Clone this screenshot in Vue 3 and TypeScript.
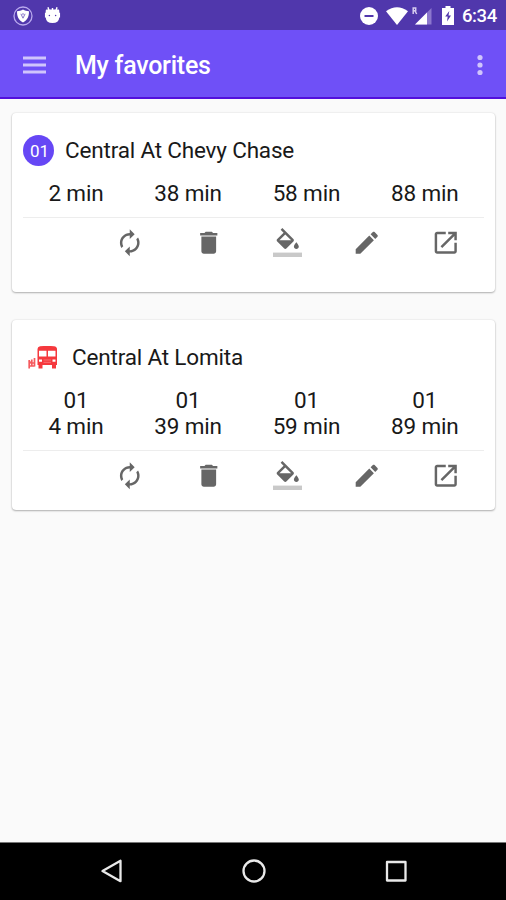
<script setup lang="ts">
interface Arrival {
  route?: string
  wait: string
}

interface Favorite {
  name: string
  badge?: string
  arrivals: Arrival[]
}

const favorites: Favorite[] = [
  {
    name: 'Central At Chevy Chase',
    badge: '01',
    arrivals: [{ wait: '2 min' }, { wait: '38 min' }, { wait: '58 min' }, { wait: '88 min' }],
  },
  {
    name: 'Central At Lomita',
    arrivals: [
      { route: '01', wait: '4 min' },
      { route: '01', wait: '39 min' },
      { route: '01', wait: '59 min' },
      { route: '01', wait: '89 min' },
    ],
  },
]
</script>

<template>
  <div class="screen">
    <header class="status">
      <div class="status-left">
        <svg class="shield" viewBox="0 0 20 20">
          <circle cx="10" cy="10" r="9" fill="none" stroke="#b9a9ee" stroke-width="1.3" />
          <path d="M10 3.600c1.800 1.200 3.900 1.600 6 1.600 0 5.200-1.600 9-6 11.200C5.600 14.200 4 10.400 4 5.200c2.100 0 4.200-.4 6-1.600z" fill="#fff" />
          <path d="M7.900 7.800l2.100 4.400 2.100-4.400M9 8h2" fill="none" stroke="#8573c8" stroke-width="1" />
        </svg>
        <svg class="robot" viewBox="0 0 18 18">
          <path d="M5.200 4L4.200.8M12.800 4l1-3.200M9 4V1.500" stroke="#fff" stroke-width="1.500" />
          <path d="M3 3.300h12q1.200 0 1.200 1.200v2.100h.8v5h-.8q-.5 6-7.200 6t-7.200-6H1v-5h.8V4.500Q1.800 3.300 3 3.300z" fill="#fff" />
          <circle cx="5.700" cy="9.500" r=".8" fill="#5438ae" />
          <circle cx="12.300" cy="9.500" r=".8" fill="#5438ae" />
        </svg>
      </div>
      <div class="status-right">
        <svg class="dnd" viewBox="0 0 18 18">
          <circle cx="9" cy="9" r="9" fill="#fff" />
          <path d="M4.500 9h9" stroke="#5137ac" stroke-width="2" />
        </svg>
        <svg class="wifi" viewBox="0 0 22 18">
          <path d="M0 4.200Q11-3.800 22 4.200L11 18z" fill="#fff" />
        </svg>
        <svg class="signal" viewBox="0 0 20 18">
          <path d="M19.500 1v16.500H3z" fill="#8c77cd" />
          <path d="M15 5.500v12H3z" fill="#fff" />
          <path d="M1.200 7V1h2.500v2.800H1.200M3 4l1.700 3" fill="none" stroke="#d6ccef" stroke-width="1.500" />
        </svg>
        <svg class="battery" viewBox="0 0 12 19">
          <path d="M3.500 0h5v2H12v17H0V2h3.500z" fill="#fff" />
          <path d="M7.300 5L3.200 10.500H5.700L5 15.500 9 9.500H6.500z" fill="#5137ac" />
        </svg>
        <span class="clock">6:34</span>
      </div>
    </header>

    <nav class="toolbar">
      <svg class="menu" viewBox="0 0 23 18">
        <path d="M0 2h23M0 9h23M0 16h23" stroke="#d0c5fc" stroke-width="2.900" />
      </svg>
      <h1>My favorites</h1>
      <svg class="more" viewBox="0 0 6 22">
        <circle cx="3" cy="3.500" r="2.600" />
        <circle cx="3" cy="11" r="2.600" />
        <circle cx="3" cy="18.500" r="2.600" />
      </svg>
    </nav>

    <main>
      <article v-for="favorite in favorites" :key="favorite.name" class="card" :class="{ grouped: !favorite.badge }">
        <div class="heading">
          <span v-if="favorite.badge" class="badge">{{ favorite.badge }}</span>
          <svg v-else class="bus" viewBox="0 0 30 23">
            <path fill="#f5383d" fill-rule="evenodd" d="M12 .3Q19.500-.5 26 .3 29 .7 29 3v16h-1v3.500h-4V19h-9.500v3.500h-4V19h-1V3Q9.500 .7 12 .3zM11 4.800v5.700h7.500V4.800zM20 4.800v5.700h7.500V4.800zM11 13.500v2.200h3V13.500zM24.500 13.500v2.200h3V13.500z" />
            <path d="M15.500 14h7.500M15.500 16.300h7.500" stroke="#ff8a8d" stroke-width=".7" />
            <path d="M1.200 14v8.500M3.800 13.500v7M6.500 12v8.500M.5 14.500l3 3M1 20h5.500M3.800 17h3" fill="none" stroke="#f55a5e" stroke-width="1.700" />
          </svg>
          <h2>{{ favorite.name }}</h2>
        </div>
        <div class="arrivals">
          <div v-for="arrival in favorite.arrivals" :key="arrival.wait" class="arrival">
            <span v-if="arrival.route">{{ arrival.route }}</span>
            <span>{{ arrival.wait }}</span>
          </div>
        </div>
        <div class="actions">
          <svg viewBox="0 0 24 24"><path d="M12 6v3l4-4-4-4v3c-4.420 0-8 3.580-8 8 0 1.570.46 3.030 1.240 4.260L6.700 14.800c-.45-.83-.7-1.790-.7-2.800 0-3.310 2.690-6 6-6zm6.760 1.740L17.300 9.200c.44.84.7 1.790.7 2.800 0 3.310-2.690 6-6 6v-3l-4 4 4 4v-3c4.420 0 8-3.580 8-8 0-1.570-.46-3.030-1.240-4.260z" /></svg>
          <svg viewBox="0 0 24 24"><path d="M6 19c0 1.100.9 2 2 2h8c1.100 0 2-.9 2-2V7H6v12zM19 4h-3.500l-1-1h-5l-1 1H5v2h14V4z" /></svg>
          <svg viewBox="0 0 24 24"><path d="M16.560 8.940L7.620 0 6.210 1.410l2.380 2.380-5.150 5.150c-.59.59-.59 1.540 0 2.120l5.500 5.500c.29.29.68.44 1.060.44s.77-.15 1.060-.44l5.500-5.500c.59-.58.59-1.530 0-2.120zM5.210 10L10 5.210 14.790 10H5.210zM19 11.500s-2 2.170-2 3.500c0 1.100.9 2 2 2s2-.9 2-2c0-1.330-2-3.500-2-3.500z" /><path class="swatch" d="M0 20h24v4H0z" /></svg>
          <svg viewBox="0 0 24 24"><path d="M3 17.250V21h3.750L17.810 9.940l-3.750-3.750L3 17.250zM20.710 7.040c.39-.39.39-1.020 0-1.410l-2.340-2.340c-.39-.39-1.020-.39-1.410 0l-1.830 1.830 3.750 3.750 1.830-1.830z" /></svg>
          <svg viewBox="0 0 24 24"><path d="M19 19H5V5h7V3H5c-1.110 0-2 .9-2 2v14c0 1.100.89 2 2 2h14c1.100 0 2-.9 2-2v-7h-2v7zM14 3v2h3.590l-9.830 9.830 1.410 1.410L19 6.410V10h2V3h-7z" /></svg>
        </div>
      </article>
    </main>

    <footer class="system-nav">
      <svg viewBox="0 0 24 24"><path d="M20.500 1.800v20.400L2.500 12z" /></svg>
      <svg viewBox="0 0 24 24"><circle cx="12" cy="12" r="10.500" /></svg>
      <svg viewBox="0 0 24 24"><rect x="3" y="3" width="18.500" height="18.500" /></svg>
    </footer>
  </div>
</template>

<style>
body {
  margin: 0;
}
</style>

<style scoped>
.screen {
  width: 506px;
  height: 900px;
  display: flex;
  flex-direction: column;
  background: #fafafa;
  font-family: Roboto, sans-serif;
  color: #191919;
  overflow: hidden;
}
svg {
  display: block;
  flex: none;
}
h1,
h2 {
  margin: 0;
  white-space: nowrap;
}
.status {
  height: 30px;
  box-sizing: border-box;
  display: flex;
  justify-content: space-between;
  align-items: center;
  padding: 1px 9px 0 13px;
  background: #5037ac;
}
.status-left,
.status-right {
  display: flex;
  align-items: center;
}
.status-left {
  gap: 11px;
}
.shield {
  width: 20px;
  height: 20px;
}
.robot {
  width: 17px;
  height: 18px;
  margin-top: -2px;
}
.dnd {
  width: 18px;
  height: 18px;
  margin-right: 8px;
}
.wifi {
  width: 22px;
  height: 18px;
  margin-right: 4px;
}
.signal {
  width: 20px;
  height: 18px;
  margin-right: 10px;
}
.battery {
  width: 12px;
  height: 19px;
  margin-right: 8px;
}
.clock {
  width: 35px;
  font-size: 18.500px;
  line-height: 28px;
  font-weight: 500;
  letter-spacing: -0.400px;
  color: #fff;
}
.toolbar {
  height: 69px;
  box-sizing: border-box;
  display: flex;
  align-items: center;
  padding: 2px 23px 0;
  background: #6f50f7;
  border-bottom: 2px solid #5210dc;
}
.menu {
  width: 23px;
  height: 18px;
}
h1 {
  margin-left: 29px;
  padding-top: 3px;
  font-size: 25px;
  line-height: 30px;
  font-weight: 500;
  letter-spacing: -0.250px;
  color: #fff;
}
.more {
  width: 6px;
  height: 22px;
  margin-left: auto;
  fill: #d0c5fc;
}
main {
  flex: 1;
  display: flex;
  flex-direction: column;
  gap: 28px;
  padding: 14px 11px 0 12px;
}
.card {
  height: 179px;
  box-sizing: border-box;
  padding: 19px 11px 0;
  background: #fff;
  border-radius: 4px;
  box-shadow: 0 1px 2px rgba(0, 0, 0, 0.280), 0 0 2px rgba(0, 0, 0, 0.120);
}
.grouped {
  height: 190px;
}
.heading {
  display: flex;
  align-items: center;
  height: 36px;
}
.badge {
  width: 31px;
  height: 31px;
  line-height: 32px;
  border-radius: 50%;
  background: #6647f5;
  color: #fff;
  font-size: 17px;
  text-align: center;
  text-indent: 2px;
}
.bus {
  width: 30px;
  height: 23px;
  margin: 0 8px 0 5px;
}
h2 {
  margin-left: 11px;
  font-size: 22.500px;
  line-height: 30px;
  font-weight: 400;
  letter-spacing: -0.180px;
}
.grouped h2 {
  margin-left: 6px;
}
.arrivals {
  display: flex;
  justify-content: space-around;
  padding: 12px 0 11px;
  border-bottom: 1px solid #ededed;
}
.arrival {
  display: flex;
  flex-direction: column;
  align-items: center;
  font-size: 22.500px;
  line-height: 26px;
  letter-spacing: -0.150px;
  white-space: nowrap;
}
.actions {
  display: flex;
  justify-content: flex-end;
  gap: 49.500px;
  padding: 9.500px 24px 0 0;
}
.actions svg {
  width: 29.500px;
  height: 29.500px;
  fill: #666;
}
.actions .swatch {
  fill: #c9c9c9;
}
.system-nav {
  height: 58px;
  box-sizing: border-box;
  display: flex;
  justify-content: space-between;
  align-items: center;
  padding: 0 98px 1px 100px;
  background: #000;
  border-top: 1px solid #777;
}
.system-nav svg {
  width: 24px;
  height: 24px;
  fill: none;
  stroke: #e9e9e9;
  stroke-width: 2.300;
  stroke-linejoin: round;
}
</style>
